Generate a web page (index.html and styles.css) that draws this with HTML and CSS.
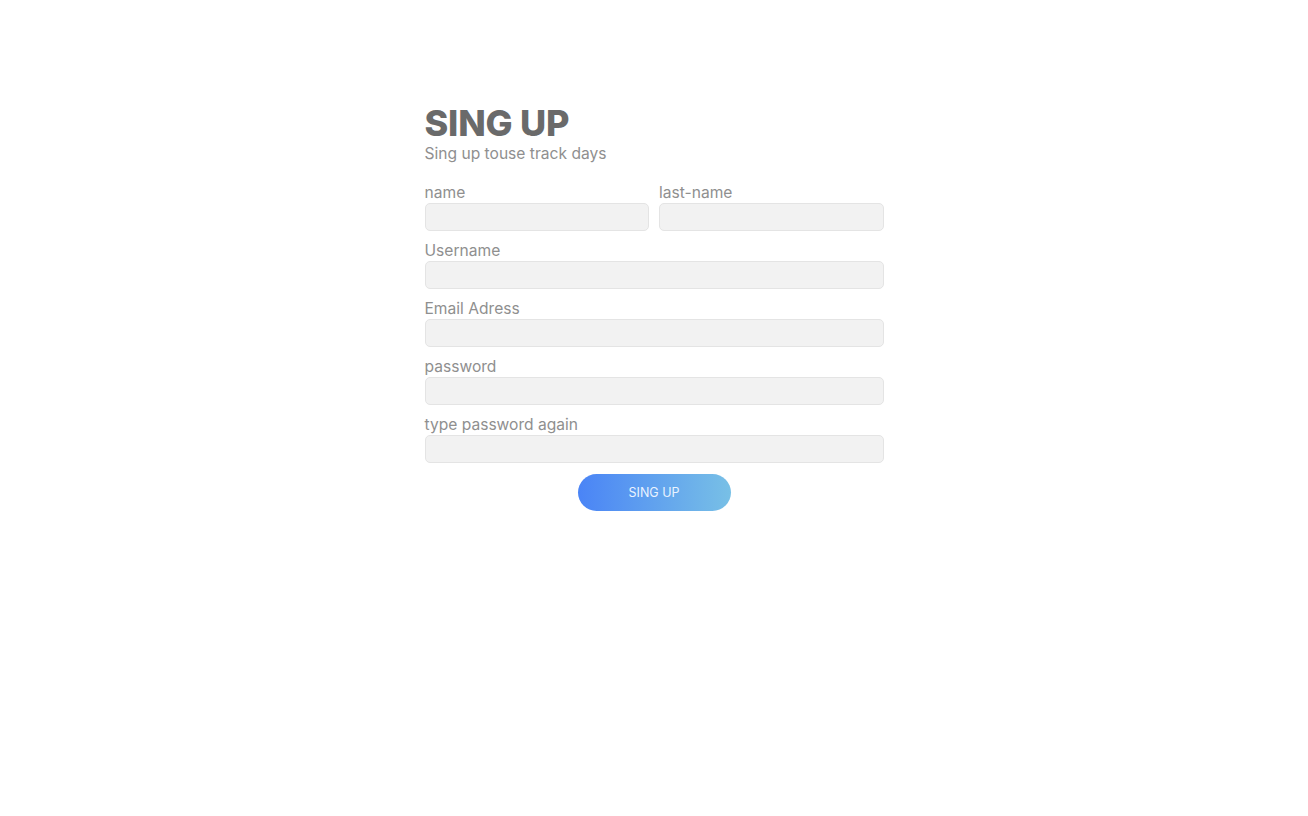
FILE: index.html
```html
<!DOCTYPE html>
<html>
<head>
<meta charset="utf-8">
<link rel="stylesheet" href="styles.css">
</head>
<body>
<main class="page">
  <form class="signup">
    <h1 class="title">SING UP</h1>
    <p class="subtitle">Sing up touse track days</p>
    <div class="row two">
      <label class="field">
        <span class="label">name</span>
        <input class="input" type="text">
      </label>
      <label class="field">
        <span class="label">last-name</span>
        <input class="input" type="text">
      </label>
    </div>
    <label class="field">
      <span class="label">Username</span>
      <input class="input" type="text">
    </label>
    <label class="field">
      <span class="label">Email Adress</span>
      <input class="input" type="email">
    </label>
    <label class="field">
      <span class="label">password</span>
      <input class="input" type="password">
    </label>
    <label class="field">
      <span class="label">type password again</span>
      <input class="input" type="password">
    </label>
    <div class="actions">
      <button class="btn" type="button">SING UP</button>
    </div>
  </form>
</main>
</body>
</html>
```

FILE: styles.css
```css
* { box-sizing: border-box; }
html, body { margin: 0; padding: 0; background: #ffffff; }
body { font-family: Inter, "Noto Sans", sans-serif; }
.page {
  display: flex;
  justify-content: center;
  padding-top: 103px;
}
.signup {
  width: 459px;
  display: flex;
  flex-direction: column;
  gap: 10px;
}
.title {
  margin: 0;
  font-size: 36px;
  line-height: 40px;
  font-weight: 800;
  color: #6a6a6a;
  letter-spacing: -0.2px;
}
.subtitle {
  margin: -9px 0 9px;
  font-size: 15.6px;
  line-height: 20px;
  color: #8f8f8f;
}
.row.two {
  display: grid;
  grid-template-columns: 1fr 1fr;
  gap: 10px;
}
.field {
  display: flex;
  flex-direction: column;
  gap: 0;
}
.label {
  font-size: 15.6px;
  line-height: 20px;
  color: #8f8f8f;
}
.input {
  height: 28px;
  width: 100%;
  border: 1px solid #e4e4e4;
  border-radius: 5px;
  background: #f2f2f2;
  outline: none;
  font: inherit;
}
.actions {
  display: flex;
  justify-content: center;
  padding-top: 1px;
}
.btn {
  width: 153px;
  height: 37px;
  border: none;
  border-radius: 19px;
  background: linear-gradient(90deg, #4a84f6 0%, #78c0e6 100%);
  color: #eaf3ff;
  font-family: Inter, "Noto Sans", sans-serif;
  font-size: 12.5px;
  font-weight: 400;
  cursor: pointer;
}
```
